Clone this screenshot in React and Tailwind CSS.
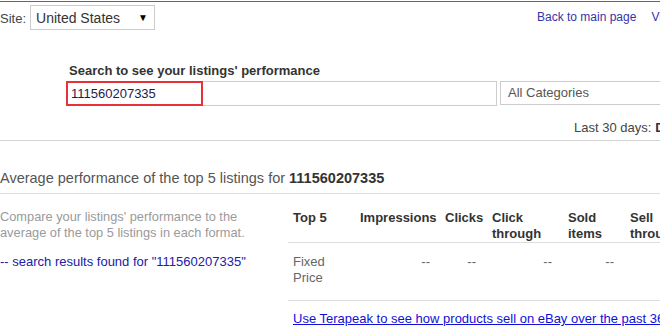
import React from 'react';

const cols = [
  { key: 'top', label: 'Top 5', w: 'w-[67px]' },
  { key: 'imp', label: 'Impressions', w: 'w-[85px]' },
  { key: 'clk', label: 'Clicks', w: 'w-[47px]' },
  { key: 'ctr', label: 'Click through', w: 'w-[76px]' },
  { key: 'sold', label: 'Sold items', w: 'w-[62px]' },
  { key: 'str', label: 'Sell through', w: 'w-[80px]' },
];

const App = () => {
  return (
    <div className="w-[660px] h-[333px] overflow-hidden bg-white font-['Liberation_Sans',Arial,sans-serif] text-[13px] text-[#444]">
      <div className="w-[780px]">
        <div className="h-px mt-px bg-[#666]" />

        {/* site row */}
        <div className="flex items-start h-[46px] pt-[3px]">
          <div className="w-[537px] flex items-start">
            <span className="mt-[6px] leading-[15px]">Site:</span>
            <div className="ml-[4px] w-[125px] h-[25px] border border-[#ccc] flex items-center justify-between pl-[5px] pr-[6px]">
              <span className="text-[14px] text-[#333] leading-none">United States</span>
              <span className="text-[10px] text-black leading-none">▼</span>
            </div>
          </div>
          <a className="mt-[5px] text-[12px] text-[#3535a8] leading-[15px]">Back to main page</a>
          <a className="ml-[15px] mt-[5px] text-[12px] text-[#3535a8] leading-[15px]">View</a>
        </div>

        {/* search */}
        <div className="pl-[69px]">
          <div className="font-bold text-[#333] leading-[15px] mt-[15px]">Search to see your listings' performance</div>
          <div className="flex mt-[3px] -ml-[3px]">
            <div className="relative w-[431px] h-[25px] border border-[#ccc]">
              <div className="absolute -left-px -top-px w-[137px] h-[25px] border-2 border-[#e8323a]" />
              <span className="absolute left-[4px] top-[4px] leading-[15px] text-[#1c1c50]">111560207335</span>
            </div>
            <div className="ml-[3px] w-[200px] h-[24px] border border-[#ccc] flex items-center pl-[7px] text-[#555]">
              All Categories
            </div>
          </div>
        </div>

        <div className="flex mt-[14px] pl-[574px] leading-[15px]">
          <span>Last 30 days:</span>
          <span className="ml-[4px] font-bold text-[#333]">Dec 2014</span>
        </div>

        <div className="h-px mt-[5px] bg-[#d4d4d4]" />

        {/* heading */}
        <div className="mt-[28px] text-[14.5px] leading-[18px] text-[#555]">
          Average performance of the top 5 listings for <span className="font-bold text-[#333]">111560207335</span>
        </div>
        <div className="h-px mt-[6px] bg-[#ddd]" />

        <div className="flex">
          <div className="w-[288px] pt-[15px]">
            <p className="text-[12.8px] leading-[16px] text-[#9a9a9a] whitespace-nowrap">
              Compare your listings' performance to the<br />average of the top 5 listings in each format.
            </p>
            <p className="mt-[13px] text-[#2020a8] leading-[15px]">-- search results found for "111560207335"</p>
          </div>

          <div className="flex-1">
            <div className="flex pt-[16px] h-[49px] border-b border-[#ddd] font-bold text-[#333] leading-[16px]">
              {cols.map((c) => (
                <div key={c.key} className={`${c.w} pl-[5px]`}>{c.label}</div>
              ))}
            </div>
            <div className="flex pt-[11px] h-[58px] border-b border-[#ddd] leading-[16px] text-[#666]">
              <div className="w-[67px] pl-[5px]">Fixed<br />Price</div>
              <div className="w-[85px] pr-[10px] text-right">--</div>
              <div className="w-[47px] pr-[11px] text-right">--</div>
              <div className="w-[76px] pr-[11px] text-right">--</div>
              <div className="w-[62px] pr-[11px] text-right">--</div>
              <div className="w-[80px] pr-[11px] text-right">--</div>
            </div>
            <a className="block mt-[10px] ml-[5px] underline text-[#1010d8] leading-[15px] whitespace-nowrap">
              Use Terapeak to see how products sell on eBay over the past 365 days
            </a>
          </div>
        </div>
      </div>
    </div>
  );
};

export default App;
